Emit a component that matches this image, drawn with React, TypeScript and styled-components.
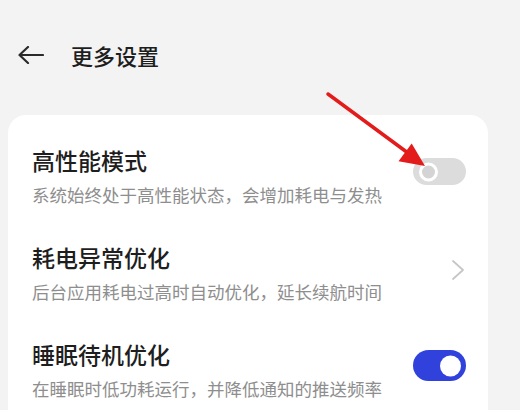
import React from "react";
import styled, { createGlobalStyle } from "styled-components";

const Global = createGlobalStyle`
  html, body { margin: 0; padding: 0; }
  body {
    background: #f3f3f3;
    font-family: "Noto Sans CJK SC", "Noto Sans", sans-serif;
  }
`;

const Page = styled.div`
  position: relative;
  width: 520px;
  height: 410px;
  overflow: hidden;
  background: #f3f3f3;
`;

const Header = styled.div`
  display: flex;
  align-items: center;
  height: 30px;
  padding: 40px 0 0 18px;
`;

const BackButton = styled.div`
  display: flex;
  align-items: center;
  width: 26px;
  height: 30px;
  margin-right: 27px;
`;

const Title = styled.h1`
  margin: 0;
  font-size: 22px;
  font-weight: 500;
  line-height: 30px;
  color: #1e1e1e;
`;

const Card = styled.div`
  margin: 45px 0 0 8px;
  width: 480px;
  height: 330px;
  background: #fff;
  border-radius: 18px;
  padding: 30px 22px 0 24px;
  box-sizing: border-box;
  display: flex;
  flex-direction: column;
  gap: 35px;
`;

const Row = styled.div`
  display: flex;
  align-items: center;
  justify-content: space-between;
`;

const Texts = styled.div`
  display: flex;
  flex-direction: column;
`;

const ItemTitle = styled.div`
  font-size: 23px;
  font-weight: 500;
  line-height: 30px;
  color: #1e1e1e;
`;

const ItemDesc = styled.div`
  margin-top: 8px;
  font-size: 17.5px;
  line-height: 24px;
  color: #8e8e8e;
`;

const Track = styled.div<{ $on: boolean }>`
  position: relative;
  width: 53px;
  height: ${(p) => (p.$on ? 31 : 27)}px;
  margin-bottom: 9px;
  border-radius: 16px;
  background: ${(p) => (p.$on ? "#3142dc" : "#dcdcdc")};
  flex-shrink: 0;
`;

const Knob = styled.div<{ $on: boolean }>`
  position: absolute;
  top: 50%;
  transform: translateY(-50%);
  box-sizing: border-box;
  border-radius: 50%;
  ${(p) =>
    p.$on
      ? `right: 5px; width: 21px; height: 21px; background: #fff;`
      : `left: 6px; width: 19px; height: 19px; border: 3px solid #fff; background: #d4d4d4;`}
`;

const Chevron = styled.div`
  display: flex;
  margin-right: 1px;
  margin-bottom: 6px;
`;

const Overlay = styled.svg`
  position: absolute;
  left: 0;
  top: 0;
  pointer-events: none;
`;

const Switch = ({ on }: { on: boolean }) => (
  <Track $on={on}>
    <Knob $on={on} />
  </Track>
);

export default function App() {
  return (
    <Page>
      <Global />
      <Header>
        <BackButton>
          <svg width="26" height="18" viewBox="0 0 26 18">
            <path d="M25 9H1.5M10 1L1.5 9L10 17" fill="none" stroke="#2a2a2a" strokeWidth="2.2" strokeLinecap="round" strokeLinejoin="round" />
          </svg>
        </BackButton>
        <Title>更多设置</Title>
      </Header>
      <Card>
        <Row>
          <Texts>
            <ItemTitle>高性能模式</ItemTitle>
            <ItemDesc>系统始终处于高性能状态，会增加耗电与发热</ItemDesc>
          </Texts>
          <Switch on={false} />
        </Row>
        <Row>
          <Texts>
            <ItemTitle>耗电异常优化</ItemTitle>
            <ItemDesc>后台应用耗电过高时自动优化，延长续航时间</ItemDesc>
          </Texts>
          <Chevron>
            <svg width="14" height="22" viewBox="0 0 14 22">
              <path d="M2 2L12 11L2 20" fill="none" stroke="#c6c6c6" strokeWidth="1.8" strokeLinecap="round" strokeLinejoin="round" />
            </svg>
          </Chevron>
        </Row>
        <Row>
          <Texts>
            <ItemTitle>睡眠待机优化</ItemTitle>
            <ItemDesc>在睡眠时低功耗运行，并降低通知的推送频率</ItemDesc>
          </Texts>
          <Switch on={true} />
        </Row>
      </Card>
      <Overlay width="520" height="410" viewBox="0 0 520 410">
        <line x1="328" y1="94" x2="408" y2="153" stroke="#e31b1b" strokeWidth="3.5" strokeLinecap="round" />
        <polygon points="425,166 398.5,161.3 411.7,143.6" fill="#e31b1b" />
      </Overlay>
    </Page>
  );
}
